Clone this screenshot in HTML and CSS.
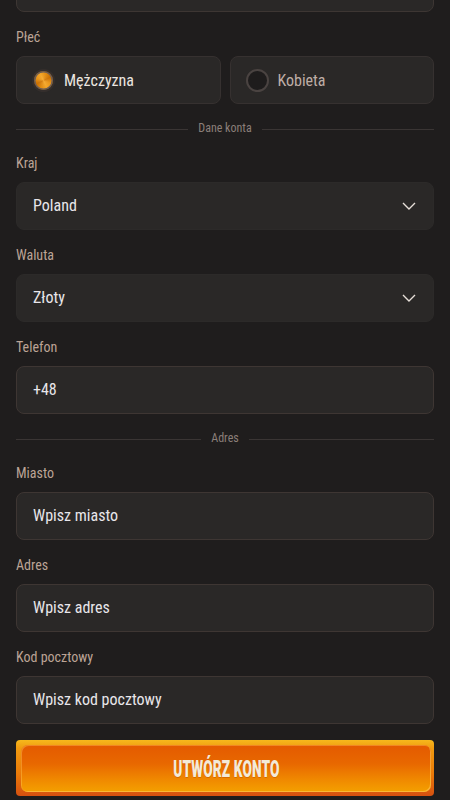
FILE: index.html
```html
<!DOCTYPE html>
<html lang="pl">
<head>
<meta charset="utf-8">
<title>Rejestracja</title>
<link rel="stylesheet" href="styles.css">
</head>
<body>
<form class="form">
  <div class="field field-top"></div>

  <div class="group">
    <div class="label">Płeć</div>
    <div class="radios">
      <label class="radio"><span class="dot dot-on"></span><span class="radio-text">Mężczyzna</span></label>
      <label class="radio"><span class="dot"></span><span class="radio-text radio-text-off">Kobieta</span></label>
    </div>
  </div>

  <div class="divider"><span class="divider-text">Dane konta</span></div>

  <div class="group">
    <div class="label">Kraj</div>
    <div class="field select"><span class="value">Poland</span>
      <svg class="chev" width="14" height="8" viewBox="0 0 14 8"><path d="M1 1 L7 7 L13 1" fill="none" stroke="#e6dfd8" stroke-width="1.4"/></svg>
    </div>
  </div>

  <div class="group">
    <div class="label">Waluta</div>
    <div class="field select"><span class="value">Złoty</span>
      <svg class="chev" width="14" height="8" viewBox="0 0 14 8"><path d="M1 1 L7 7 L13 1" fill="none" stroke="#e6dfd8" stroke-width="1.4"/></svg>
    </div>
  </div>

  <div class="group">
    <div class="label">Telefon</div>
    <div class="field input"><span class="value">+48</span></div>
  </div>

  <div class="divider"><span class="divider-text">Adres</span></div>

  <div class="group">
    <div class="label">Miasto</div>
    <div class="field input"><span class="value">Wpisz miasto</span></div>
  </div>

  <div class="group">
    <div class="label">Adres</div>
    <div class="field input"><span class="value">Wpisz adres</span></div>
  </div>

  <div class="group">
    <div class="label">Kod pocztowy</div>
    <div class="field input"><span class="value">Wpisz kod pocztowy</span></div>
  </div>

  <div class="btn"><div class="btn-inner"><span class="btn-text">UTWÓRZ KONTO</span></div></div>
</form>
</body>
</html>
```

FILE: styles.css
```css
html, body {
  margin: 0;
  padding: 0;
  background: #1f1d1d;
}
body {
  font-family: "Roboto Condensed", Roboto, "Liberation Sans", sans-serif;
  color: #e6e2dc;
  overflow: hidden;
  height: 800px;
}
.form {
  padding: 0 16px;
  display: flex;
  flex-direction: column;
}
.field {
  height: 48px;
  box-sizing: border-box;
  border-radius: 8px;
  background: #2a2827;
  display: flex;
  align-items: center;
  padding: 0 16px;
}
.field-top {
  margin-top: -36px;
  border: 1px solid #3d3633;
}
.input {
  border: 1px solid #3e3633;
}
.select {
  border: 1px solid #2c2a29;
  justify-content: space-between;
  padding-right: 17px;
}
.value {
  font-size: 16px;
  color: #e8e6ea;
  line-height: 20px;
}
.chev {
  display: block;
}
.group {
  display: flex;
  flex-direction: column;
  margin-top: 16px;
}
.label {
  font-size: 14px;
  line-height: 18px;
  height: 18px;
  margin-bottom: 10px;
  color: #bca496;
}
.radios {
  display: flex;
  gap: 9px;
}
.radio {
  flex: 1;
  height: 48px;
  box-sizing: border-box;
  border-radius: 8px;
  background: #2a2827;
  border: 1px solid #363130;
  display: flex;
  align-items: center;
  padding-left: 15px;
  gap: 9px;
}
.dot {
  width: 23px;
  height: 23px;
  box-sizing: border-box;
  border-radius: 50%;
  border: 2px solid #4a4341;
  background: #1e1c1c;
}
.dot-on {
  border: 2px solid #342e2c;
  background:
    radial-gradient(circle at 50% 50%, rgba(255,200,110,.25) 0, rgba(255,200,110,0) 55%),
    conic-gradient(from 20deg, #e08a10, #c96e00, #e89418, #f4a628, #e08a10, #c96e00, #e89418, #f4a628, #e08a10);
  box-shadow: inset 0 0 0 1.5px #6b5d57;
}
.radio-text {
  font-size: 16px;
  color: #ece6e0;
}
.radio-text-off {
  color: #bfaea6;
}
.divider {
  margin-top: 16px;
  height: 18px;
  display: flex;
  align-items: center;
  gap: 10px;
}
.divider::before, .divider::after {
  content: "";
  flex: 1;
  height: 1px;
  background: #3a3534;
}
.divider-text {
  font-size: 12px;
  color: #8b7f79;
  line-height: 16px;
  margin-top: -2px;
}
.btn {
  margin-top: 16px;
  height: 56px;
  box-sizing: border-box;
  border-radius: 4px;
  padding: 5px 3px 4px 5px;
  background: linear-gradient(180deg, #f6b81c 0%, #f09a10 15%, #ea7a08 60%, #d65010 100%);
  display: flex;
}
.btn-inner {
  flex: 1;
  border-radius: 7px;
  background: linear-gradient(180deg, #e45a00 0%, #e86800 40%, #f08a00 75%, #f4a000 100%);
  box-shadow: inset 1px 1px 0 rgba(255,190,80,.45), inset -1px -1px 0 rgba(255,200,90,.6);
  display: flex;
  align-items: center;
  justify-content: center;
}
.btn-text {
  font-family: Roboto, "Liberation Sans", sans-serif;
  font-weight: 900;
  font-size: 24px;
  color: #f3ead8;
  display: inline-block;
  transform: scaleX(0.57);
  letter-spacing: 0.2px;
  text-shadow: 0 1px 0 rgba(150,50,0,.3);
}
```
